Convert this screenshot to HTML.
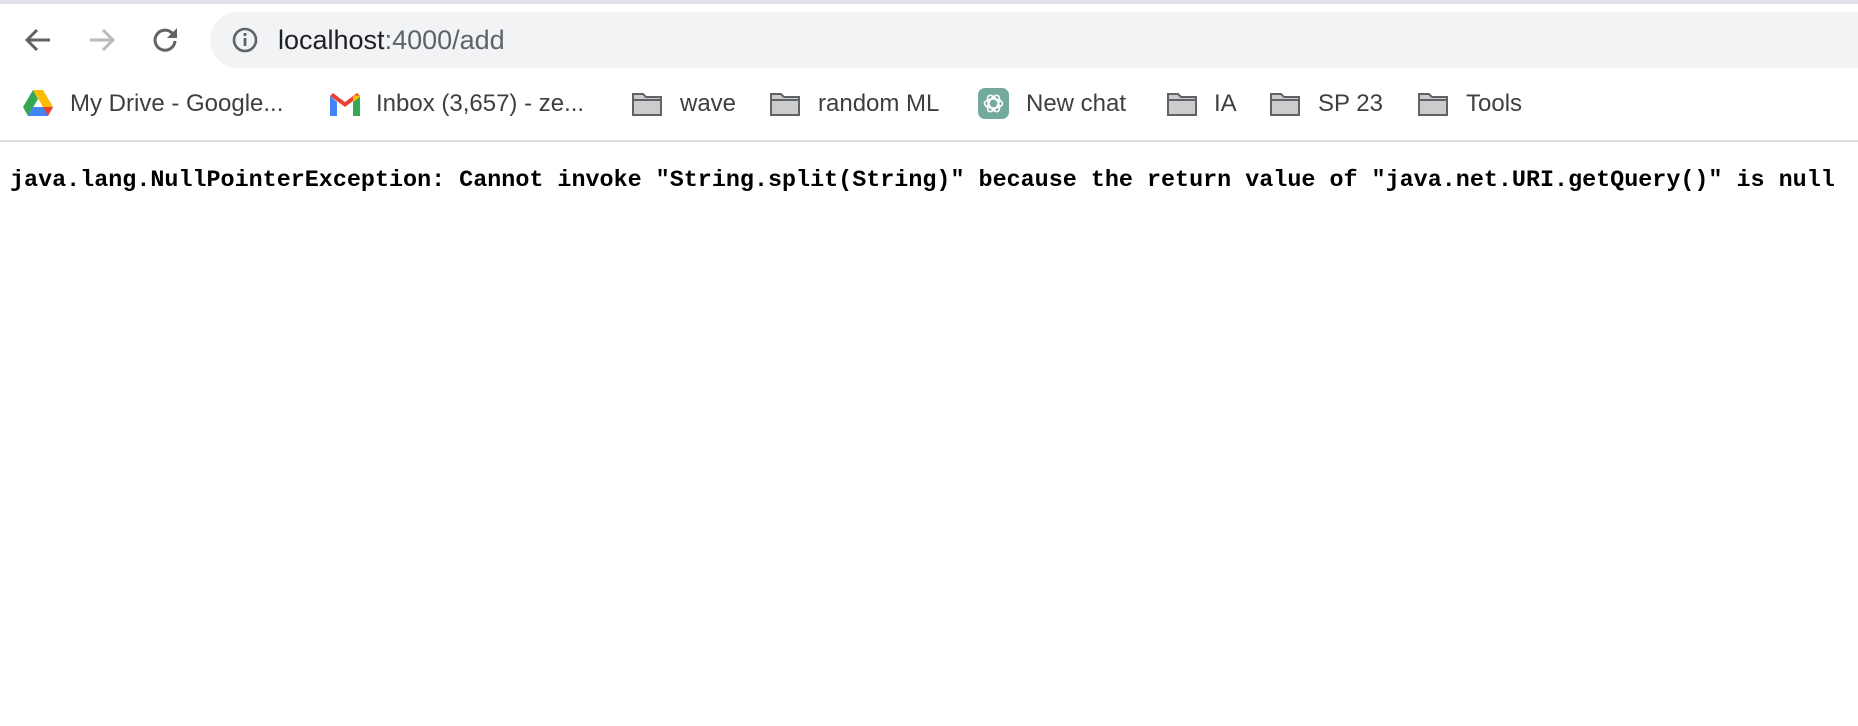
<!DOCTYPE html>
<html><head><style>
body{margin:0;width:1858px;height:726px;background:#fff;position:relative;overflow:hidden;font-family:"Liberation Sans",sans-serif}
.a{position:absolute}
.bm{position:absolute;top:90px;font-size:24px;color:#3c4043;line-height:28px;white-space:nowrap}
.fd{position:absolute;top:92px;width:30px;height:24px}
</style></head><body>
<div class="a" style="left:0;top:0;width:1858px;height:4px;background:#dee1e5"></div>
<svg class="a" style="left:22px;top:24px" width="32" height="32" viewBox="0 0 32 32"><path d="M28 16H5M15 6L5 16l10 10" fill="none" stroke="#5f6368" stroke-width="3"/></svg>
<svg class="a" style="left:86px;top:24px" width="32" height="32" viewBox="0 0 32 32"><path d="M4 16h23M17 6l10 10-10 10" fill="none" stroke="#b9babc" stroke-width="3"/></svg>
<svg class="a" style="left:150px;top:24px" width="32" height="32" viewBox="0 0 32 32"><path d="M25 17a10 10 0 1 1-3-8" fill="none" stroke="#5f6368" stroke-width="3"/><path d="M27 4v10H17z" fill="#5f6368"/></svg>
<div class="a" style="left:210px;top:12px;width:1700px;height:56px;border-radius:28px;background:#f1f3f4"></div>
<svg class="a" style="left:231px;top:26px" width="28" height="28" viewBox="0 0 28 28"><circle cx="14" cy="14" r="11" fill="none" stroke="#5f6368" stroke-width="2.6"/><rect x="12.6" y="12" width="2.8" height="8" fill="#5f6368"/><circle cx="14" cy="8.5" r="1.6" fill="#5f6368"/></svg>
<div class="a" style="left:278px;top:23px;font-size:27px;line-height:34px;color:#202124">localhost<span style="color:#5f6368">:4000/add</span></div>
<svg class="a" style="left:23px;top:90px" width="30" height="27" viewBox="0 0 30 27"><path d="M10 0h10l10 17h-10z" fill="#fbbc04"/><path d="M10 0L0 17l5 9 10-17z" fill="#34a853"/><path d="M5 26h20l5-9H10z" fill="#4285f4"/><path d="M30 17l-5 9-5-9z" fill="#ea4335"/></svg>
<div class="bm" style="left:70px">My Drive - Google...</div>
<svg class="a" style="left:330px;top:93px" width="30" height="23" viewBox="0 0 30 23"><path d="M0 3v20h7V9z" fill="#4285f4"/><path d="M30 3v20h-7V9z" fill="#34a853"/><path d="M0 3l15 11L30 3 27 0 15 9 3 0z" fill="#ea4335"/><path d="M23 2v7l7-5V3z" fill="#fbbc04"/></svg>
<div class="bm" style="left:376px">Inbox (3,657) - ze...</div>
<svg class="fd" style="left:632px" viewBox="0 0 30 24"><path d="M1 2h10l3 3h15v18H1z" fill="#ccc" stroke="#5f6368" stroke-width="2"/><path d="M1 8h28" stroke="#5f6368" stroke-width="2"/></svg>
<div class="bm" style="left:680px">wave</div>
<svg class="fd" style="left:770px" viewBox="0 0 30 24"><path d="M1 2h10l3 3h15v18H1z" fill="#ccc" stroke="#5f6368" stroke-width="2"/><path d="M1 8h28" stroke="#5f6368" stroke-width="2"/></svg>
<div class="bm" style="left:818px">random ML</div>
<div class="a" style="left:978px;top:88px;width:31px;height:31px;border-radius:7px;background:#74aa9c"></div>
<svg class="a" style="left:981px;top:91px" width="25" height="25" viewBox="0 0 25 25"><g fill="none" stroke="#fff" stroke-width="1.6"><ellipse cx="12.5" cy="12.5" rx="9" ry="4.5"/><ellipse cx="12.5" cy="12.5" rx="9" ry="4.5" transform="rotate(60 12.5 12.5)"/><ellipse cx="12.5" cy="12.5" rx="9" ry="4.5" transform="rotate(120 12.5 12.5)"/></g></svg>
<div class="bm" style="left:1026px">New chat</div>
<svg class="fd" style="left:1167px" viewBox="0 0 30 24"><path d="M1 2h10l3 3h15v18H1z" fill="#ccc" stroke="#5f6368" stroke-width="2"/><path d="M1 8h28" stroke="#5f6368" stroke-width="2"/></svg>
<div class="bm" style="left:1214px">IA</div>
<svg class="fd" style="left:1270px" viewBox="0 0 30 24"><path d="M1 2h10l3 3h15v18H1z" fill="#ccc" stroke="#5f6368" stroke-width="2"/><path d="M1 8h28" stroke="#5f6368" stroke-width="2"/></svg>
<div class="bm" style="left:1318px">SP 23</div>
<svg class="fd" style="left:1418px" viewBox="0 0 30 24"><path d="M1 2h10l3 3h15v18H1z" fill="#ccc" stroke="#5f6368" stroke-width="2"/><path d="M1 8h28" stroke="#5f6368" stroke-width="2"/></svg>
<div class="bm" style="left:1466px">Tools</div>
<div class="a" style="left:0;top:140px;width:1858px;height:2px;background:#dadce0"></div>
<div class="a" style="left:10px;top:168px;font-family:'Liberation Mono',monospace;font-weight:bold;font-size:23.4px;line-height:26px;color:#000;white-space:pre">java.lang.NullPointerException: Cannot invoke "String.split(String)" because the return value of "java.net.URI.getQuery()" is null</div>
</body></html>
